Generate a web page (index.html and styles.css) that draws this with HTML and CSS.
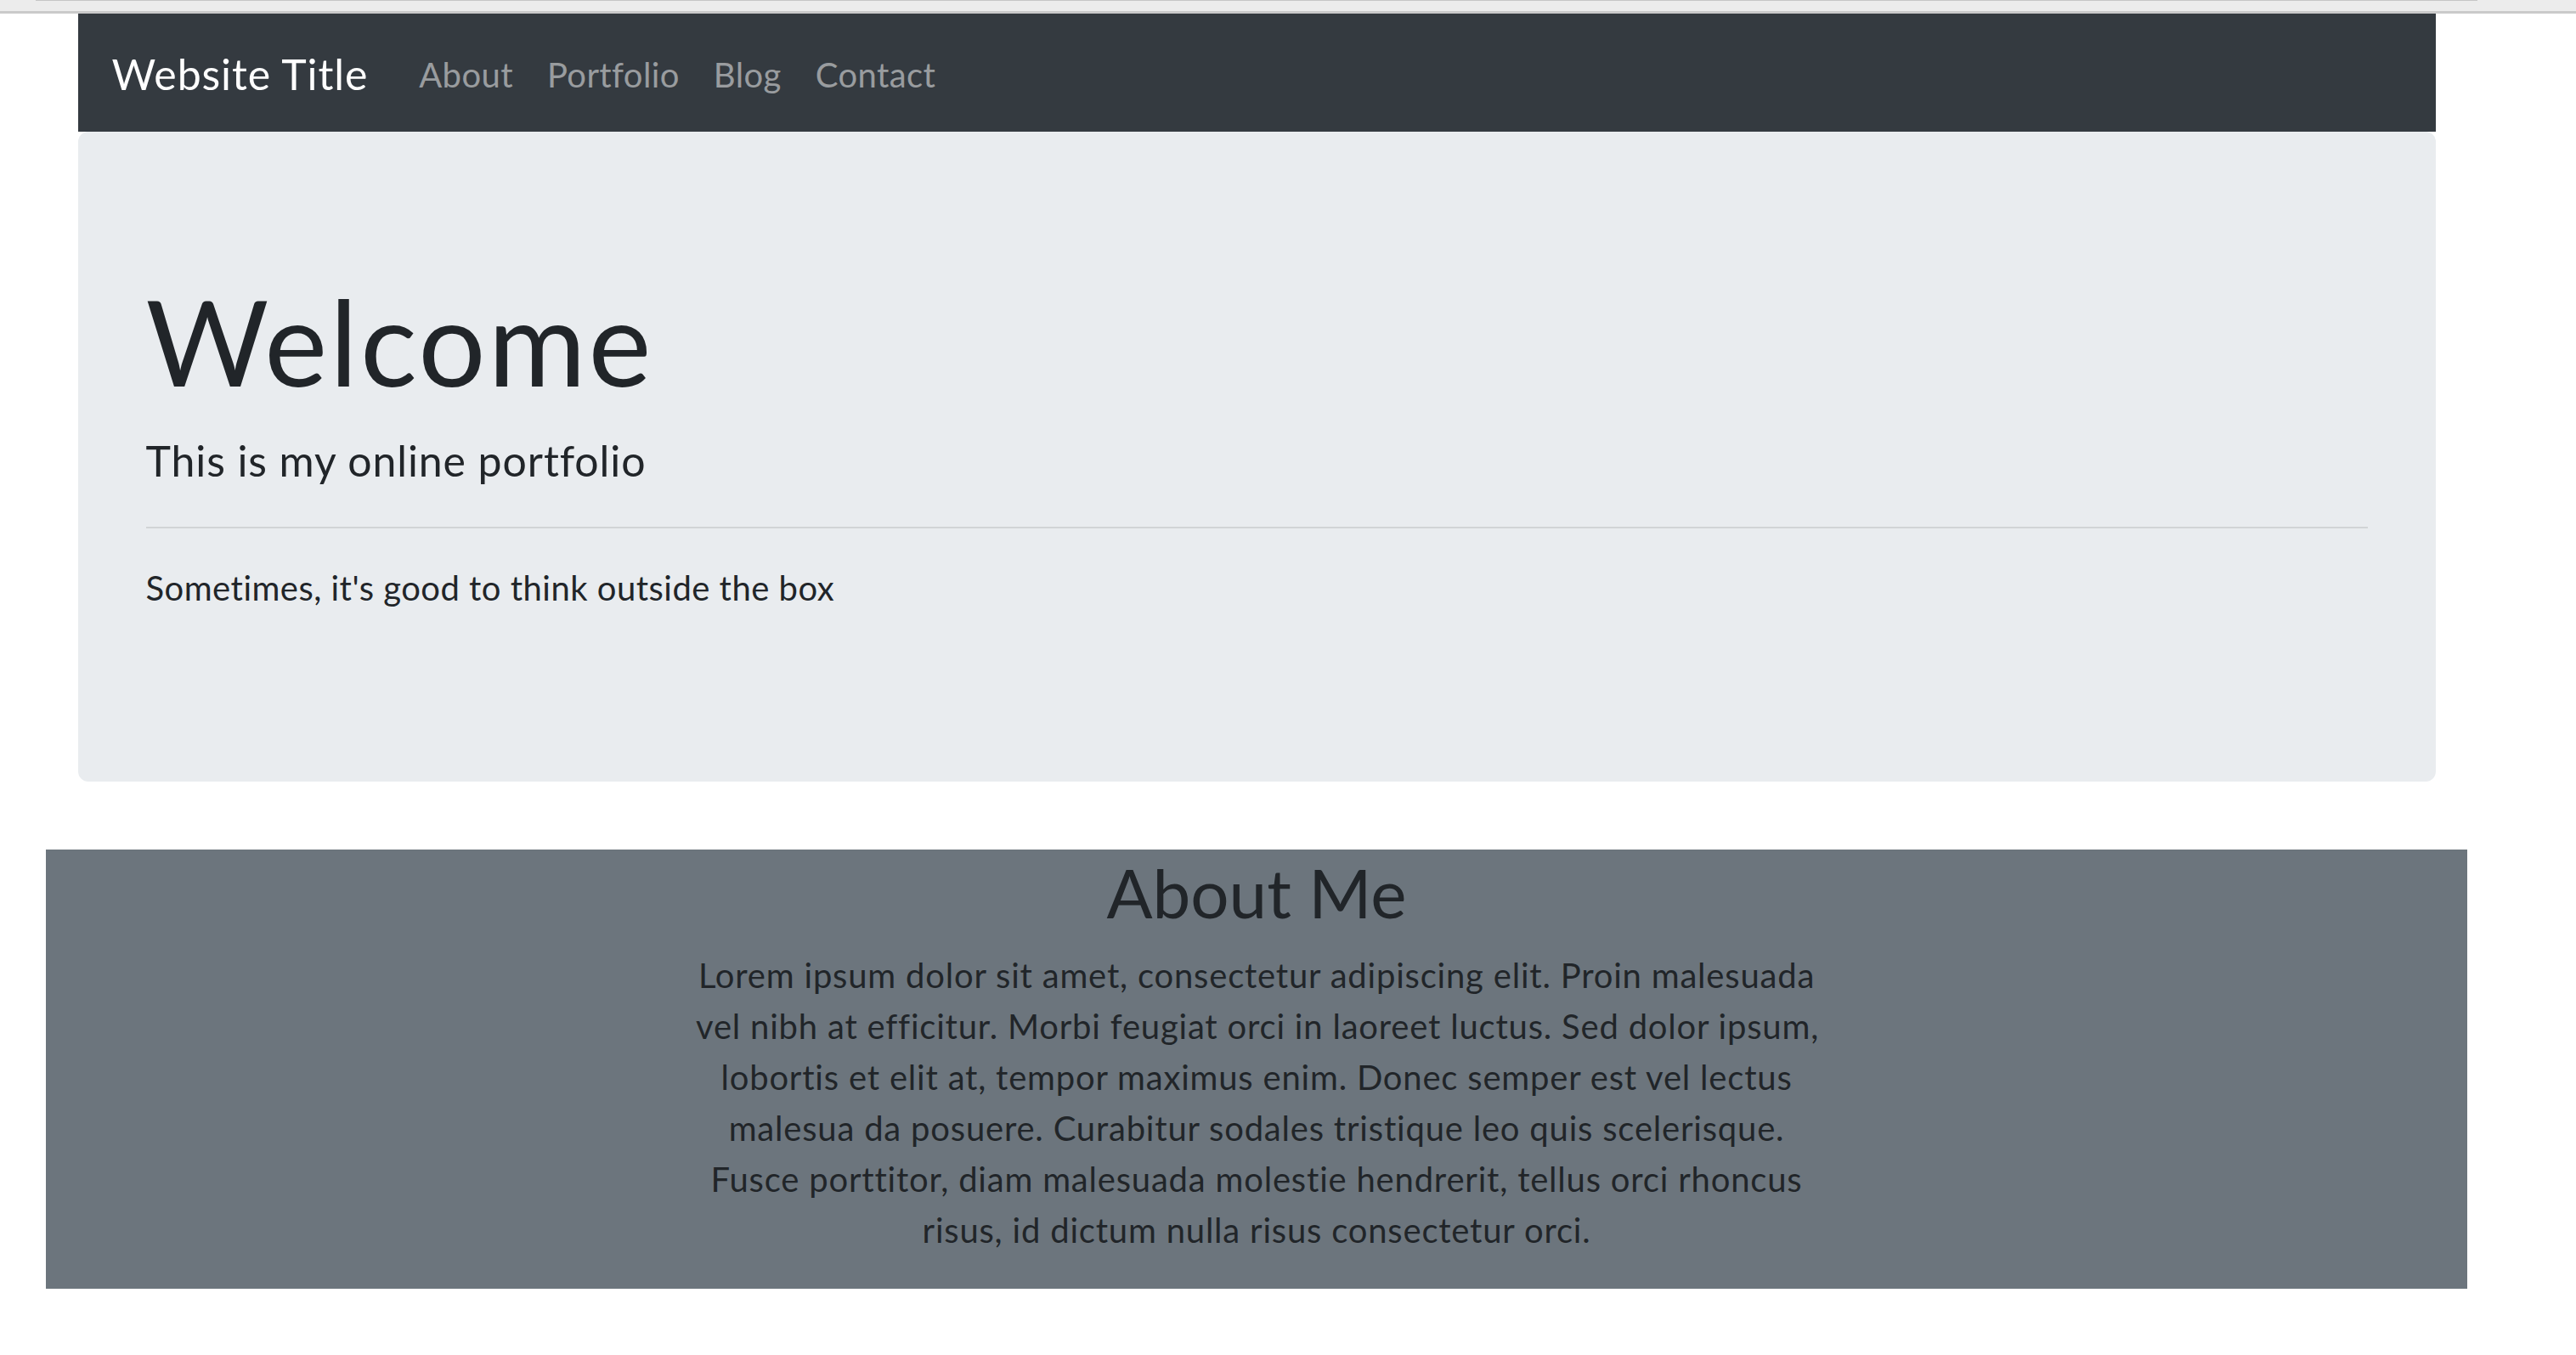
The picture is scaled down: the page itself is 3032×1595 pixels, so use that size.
FILE: index.html
```html
<!DOCTYPE html>
<html lang="en">
<head>
<meta charset="utf-8">
<title>Website Title</title>
<link rel="stylesheet" href="styles.css">
</head>
<body>
<div class="chrome"><div class="chrome-line"></div></div>
<div class="page">
  <div class="container">
    <nav class="navbar">
      <a class="brand" href="#">Website Title</a>
      <ul class="nav">
        <li><a class="nav-link" href="#">About</a></li>
        <li><a class="nav-link" href="#">Portfolio</a></li>
        <li><a class="nav-link" href="#">Blog</a></li>
        <li><a class="nav-link" href="#">Contact</a></li>
      </ul>
    </nav>
    <div class="jumbotron">
      <h1 class="display">Welcome</h1>
      <p class="lead">This is my online portfolio</p>
      <hr class="divider">
      <p class="text">Sometimes, it's good to think outside the box</p>
    </div>
  </div>
  <section class="about">
    <h2 class="about-title">About Me</h2>
    <p class="about-text">Lorem ipsum dolor sit amet, consectetur adipiscing elit. Proin malesuada<br>vel nibh at efficitur. Morbi feugiat orci in laoreet luctus. Sed dolor ipsum,<br>lobortis et elit at, tempor maximus enim. Donec semper est vel lectus<br>malesua da posuere. Curabitur sodales tristique leo quis scelerisque.<br>Fusce porttitor, diam malesuada molestie hendrerit, tellus orci rhoncus<br>risus, id dictum nulla risus consectetur orci.</p>
  </section>
</div>
</body>
</html>
```

FILE: styles.css
```css
* { box-sizing: border-box; }

html, body {
  margin: 0;
  padding: 0;
  background: #ffffff;
}

body {
  font-family: Lato, "Open Sans", "Liberation Sans", sans-serif;
  font-size: 40px;
  line-height: 1.5;
  color: #212529;
}

.chrome {
  height: 16px;
  background: #ececec;
  border-bottom: 3px solid #cacaca;
}

.chrome-line {
  margin-left: 42px;
  width: 2874px;
  height: 1px;
  background: #c6c6c6;
}

.page {
  width: 2958px;
}

.container {
  width: 2850px;
  margin: 0 auto;
  padding: 0 37.5px;
}

.navbar {
  display: flex;
  align-items: center;
  height: 139px;
  padding: 22px 40px 18px;
  background: #343a40;
}

.brand {
  font-size: 50px;
  line-height: 75px;
  padding: 12px 0;
  margin-right: 40px;
  letter-spacing: 0.018em;
  color: #ffffff;
  text-decoration: none;
}

.nav {
  display: flex;
  list-style: none;
  margin: 0;
  padding: 0;
}

.nav-link {
  display: block;
  padding: 20px 20px;
  line-height: 60px;
  letter-spacing: 0.01em;
  color: rgba(255, 255, 255, 0.5);
  text-decoration: none;
}

.jumbotron {
  background: #e9ecef;
  border-radius: 12px;
  padding: 162px 80px 158px;
  margin-bottom: 80px;
}

.display {
  margin: 0 0 20px;
  font-size: 140px;
  font-weight: 400;
  line-height: 168px;
  letter-spacing: 0.02em;
}

.lead {
  margin: 0 0 40px;
  font-size: 50px;
  line-height: 75px;
  font-weight: 400;
  letter-spacing: 0.018em;
}

.divider {
  margin: 40px 0;
  border: 0;
  border-top: 2.5px solid rgba(0, 0, 0, 0.1);
  height: 0;
}

.text {
  margin: 0 0 40px;
  line-height: 60px;
  letter-spacing: 0.012em;
}

.about {
  width: 2850px;
  margin: 0 auto;
  height: 517px;
  padding-top: 2px;
  background: #6c757d;
  color: #212529;
  text-align: center;
}

.about-title {
  margin: 0 0 20px;
  font-size: 80px;
  line-height: 96px;
  font-weight: 400;
  letter-spacing: 0;
}

.about-text {
  width: 1320px;
  margin: 0 auto 40px;
  line-height: 60px;
  letter-spacing: 0.02em;
  white-space: nowrap;
}
```
